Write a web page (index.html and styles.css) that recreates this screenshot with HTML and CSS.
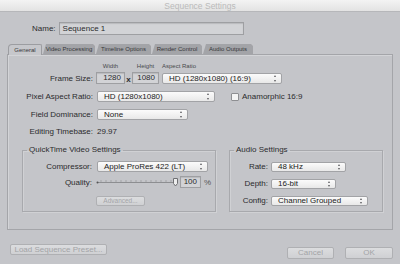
FILE: index.html
```html
<!DOCTYPE html>
<html lang="en">
<head>
    <meta charset="UTF-8">
    <title>Sequence Settings</title>
    <link rel="stylesheet" href="styles.css">
</head>
<body>
    <div class="window">
        <div class="titlebar">Sequence Settings</div>
        <div class="name-row">
            <span class="name-label">Name:</span>
            <div class="field name-field">Sequence 1</div>
        </div>
        <div class="tabs">
            <div class="tab active t-general">General</div>
            <div class="tab t-video">Video Processing</div>
            <div class="tab t-timeline">Timeline Options</div>
            <div class="tab t-render">Render Control</div>
            <div class="tab t-audio">Audio Outputs</div>
        </div>
        <div class="panel">
            <div class="hdr">
                <span class="h-w">Width</span>
                <span class="h-x"></span>
                <span class="h-h">Height</span>
                <span class="h-ar">Aspect Ratio</span>
            </div>
            <div class="row frame-row">
                <span class="lbl">Frame Size:</span>
                <div class="field num w-1280">1280</div>
                <span class="times">x</span>
                <div class="field num w-1080">1080</div>
                <div class="select s-frame">HD (1280x1080) (16:9)</div>
            </div>
            <div class="row gap7">
                <span class="lbl">Pixel Aspect Ratio:</span>
                <div class="select s-par">HD (1280x1080)</div>
                <span class="check"></span>
                <span>Anamorphic 16:9</span>
            </div>
            <div class="row gap7">
                <span class="lbl">Field Dominance:</span>
                <div class="select s-field">None</div>
            </div>
            <div class="row gap6">
                <span class="lbl">Editing Timebase:</span>
                <span>29.97</span>
            </div>
            <div class="groups">
                <fieldset class="group qt">
                    <legend>QuickTime Video Settings</legend>
                    <div class="row first">
                        <span class="lbl">Compressor:</span>
                        <div class="select s-comp">Apple ProRes 422 (LT)</div>
                    </div>
                    <div class="row quality-row">
                        <span class="lbl">Quality:</span>
                        <svg class="slider" width="83" height="11" viewBox="0 0 83 11">
                            <line x1="1" y1="5.5" x2="79" y2="5.5" stroke="#8d8e91" stroke-width="1"/>
                            <path d="M5 3v2M10 3v2M15 3v2M20 3v2M25 3v2M30 3v2M35 3v2M40 3v2M45 3v2M50 3v2M55 3v2M60 3v2M65 3v2M70 3v2M75 3v2" stroke="#a3a4a7" stroke-width="1"/>
                            <circle cx="1.5" cy="5.5" r="1" fill="#555"/>
                            <path d="M77.5 1.5h4v5l-2 2.5l-2-2.5z" fill="#ededed" stroke="#6f7073" stroke-width="1"/>
                        </svg>
                        <div class="field num w-qual">100</div>
                        <span class="pct">%</span>
                    </div>
                    <div class="btn advanced">Advanced...</div>
                </fieldset>
                <fieldset class="group audio">
                    <legend>Audio Settings</legend>
                    <div class="row first">
                        <span class="lbl">Rate:</span>
                        <div class="select s-rate">48 kHz</div>
                    </div>
                    <div class="row gap6">
                        <span class="lbl">Depth:</span>
                        <div class="select s-depth">16-bit</div>
                    </div>
                    <div class="row gap6">
                        <span class="lbl">Config:</span>
                        <div class="select s-config">Channel Grouped</div>
                    </div>
                </fieldset>
            </div>
        </div>
        <div class="footer">
            <div class="btn load">Load Sequence Preset...</div>
            <div class="btn cancel">Cancel</div>
            <div class="btn ok">OK</div>
        </div>
    </div>
</body>
</html>
```

FILE: styles.css
```css
body {
    margin: 0;
    font-family: "Liberation Sans", Arial, sans-serif;
    font-size: 8px;
    color: #2b2b2d;
}
.window {
    width: 400px;
    height: 264px;
    background: #c4c5c9;
    overflow: hidden;
}
.titlebar {
    height: 12px;
    line-height: 12px;
    box-sizing: border-box;
    text-align: center;
    font-size: 8.5px;
    color: #bababa;
    background: linear-gradient(#f3f3f3, #e3e3e3);
    border-bottom: 1px solid #b6b7ba;
}
.name-row {
    display: flex;
    align-items: center;
    height: 13px;
    margin: 10px 0 0 32px;
}
.name-label {
    margin-right: 3px;
}
.field {
    box-sizing: border-box;
    background: #d2d3d6;
    border: 1px solid #9e9fa2;
    box-shadow: inset 0 1px 1px rgba(0,0,0,0.12);
}
.name-field {
    width: 185px;
    height: 13px;
    line-height: 11px;
    padding-left: 3px;
}

/* tabs */
.tabs {
    display: flex;
    align-items: flex-end;
    height: 10px;
    margin: 9px 0 0 8px;
    gap: 1px;
}
.tab {
    box-sizing: border-box;
    height: 10px;
    line-height: 10px;
    font-size: 6px;
    text-align: center;
    color: #36373a;
    background: #a3a4a8;
    clip-path: polygon(3px 0, calc(100% - 2px) 0, 100% 2px, 100% 100%, 0 100%);
}
.tab.active {
    position: relative;
    z-index: 1;
    height: 11px;
    margin-bottom: -1px;
    background: #c6c7cb;
    clip-path: none;
    border: 1px solid #9c9da1;
    border-bottom: none;
    border-radius: 4px 2px 0 0;
}
.t-general { width: 34px; }
.t-video { width: 52px; }
.t-timeline { width: 55px; }
.t-render { width: 50px; }
.t-audio { width: 50px; }

/* panel */
.panel {
    box-sizing: border-box;
    height: 176px;
    margin: 0 7px;
    border: 1px solid #a4a5a9;
    box-shadow: inset 1px 1px 0 #d3d4d7;
}
.row {
    display: flex;
    align-items: center;
    height: 11px;
}
.gap6 { margin-top: 6px; }
.gap7 { margin-top: 7px; }
.lbl {
    width: 85px;
    margin-right: 4px;
    text-align: right;
    white-space: nowrap;
}
.hdr {
    display: flex;
    height: 8px;
    line-height: 8px;
    margin-top: 7px;
    padding-left: 88px;
    font-size: 6px;
    color: #48494c;
}
.h-w { width: 29px; text-align: center; }
.h-x { width: 7px; }
.h-h { width: 27px; text-align: center; }
.h-ar { margin-left: 3px; }
.frame-row {
    height: 12px;
    margin-top: 2px;
}
.frame-row .lbl { margin-right: 3px; }
.num {
    height: 12px;
    line-height: 10px;
    padding-right: 3px;
    text-align: right;
}
.w-1280 { width: 29px; }
.w-1080 { width: 27px; }
.w-qual { width: 21px; margin-left: 1px; }
.times {
    width: 7px;
    text-align: center;
    font-weight: bold;
    padding-top: 2px;
}
.select {
    position: relative;
    box-sizing: border-box;
    height: 11px;
    line-height: 9px;
    padding-left: 6px;
    color: #222;
    white-space: nowrap;
    background: linear-gradient(#fbfbfb, #e8e8e8);
    border: 1px solid #a2a3a6;
    border-radius: 2px;
}
.select::before,
.select::after {
    content: "";
    position: absolute;
    right: 5px;
    border-left: 1.5px solid transparent;
    border-right: 1.5px solid transparent;
}
.select::before {
    top: 1px;
    border-bottom: 2px solid #5a5a5d;
}
.select::after {
    bottom: 1px;
    border-top: 2px solid #5a5a5d;
}
.s-frame { width: 120px; margin-left: 3px; }
.s-par { width: 118px; }
.s-field { width: 91px; }
.s-comp { width: 111px; }
.s-rate { width: 75px; height: 10px; line-height: 8px; }
.s-depth { width: 65px; height: 10px; line-height: 8px; }
.s-config { width: 97px; height: 10px; line-height: 8px; }
.check {
    width: 6px;
    height: 6px;
    margin: 0 3px 0 16px;
    background: #f4f4f4;
    border: 1px solid #8e8f92;
    border-radius: 1px;
}

/* group boxes */
.groups {
    display: flex;
    gap: 13px;
    margin: 8px 0 0 14px;
}
.group {
    box-sizing: border-box;
    height: 67px;
    margin: 0;
    padding: 0;
    border: 1px solid #a8a9ad;
    box-shadow: 1px 1px 0 #d0d1d4, inset 1px 1px 0 #d0d1d4;
}
.group legend {
    margin-left: 4px;
    padding: 0 2px;
    line-height: 10px;
    font-size: 8px;
    color: #2b2b2d;
}
.qt { width: 194px; }
.audio { width: 154px; }
.qt .lbl { width: 69px; margin-right: 5px; }
.audio .lbl { width: 38px; margin-right: 3px; }
.first { margin-top: 6px; }
.quality-row {
    height: 12px;
    margin-top: 4px;
}
.quality-row .lbl { margin-right: 4px; }
.pct {
    margin-left: 3px;
    color: #555;
}

/* buttons */
.btn {
    box-sizing: border-box;
    text-align: center;
    color: #a3a4a7;
    background: linear-gradient(#dcdddf, #cfd0d3);
    border: 1px solid #afb0b3;
    border-radius: 2px;
    white-space: nowrap;
}
.advanced {
    width: 49px;
    height: 10px;
    line-height: 8px;
    margin: 8px 0 0 73px;
    font-size: 6.5px;
}
.footer {
    display: flex;
    align-items: flex-start;
    padding: 0 7px 0 10px;
}
.load {
    width: 97px;
    height: 11px;
    line-height: 9px;
    margin-top: 14px;
}
.cancel {
    width: 47px;
    height: 12px;
    line-height: 10px;
    margin: 17px 0 0 auto;
}
.ok {
    width: 48px;
    height: 12px;
    line-height: 10px;
    margin: 17px 0 0 11px;
}
```
